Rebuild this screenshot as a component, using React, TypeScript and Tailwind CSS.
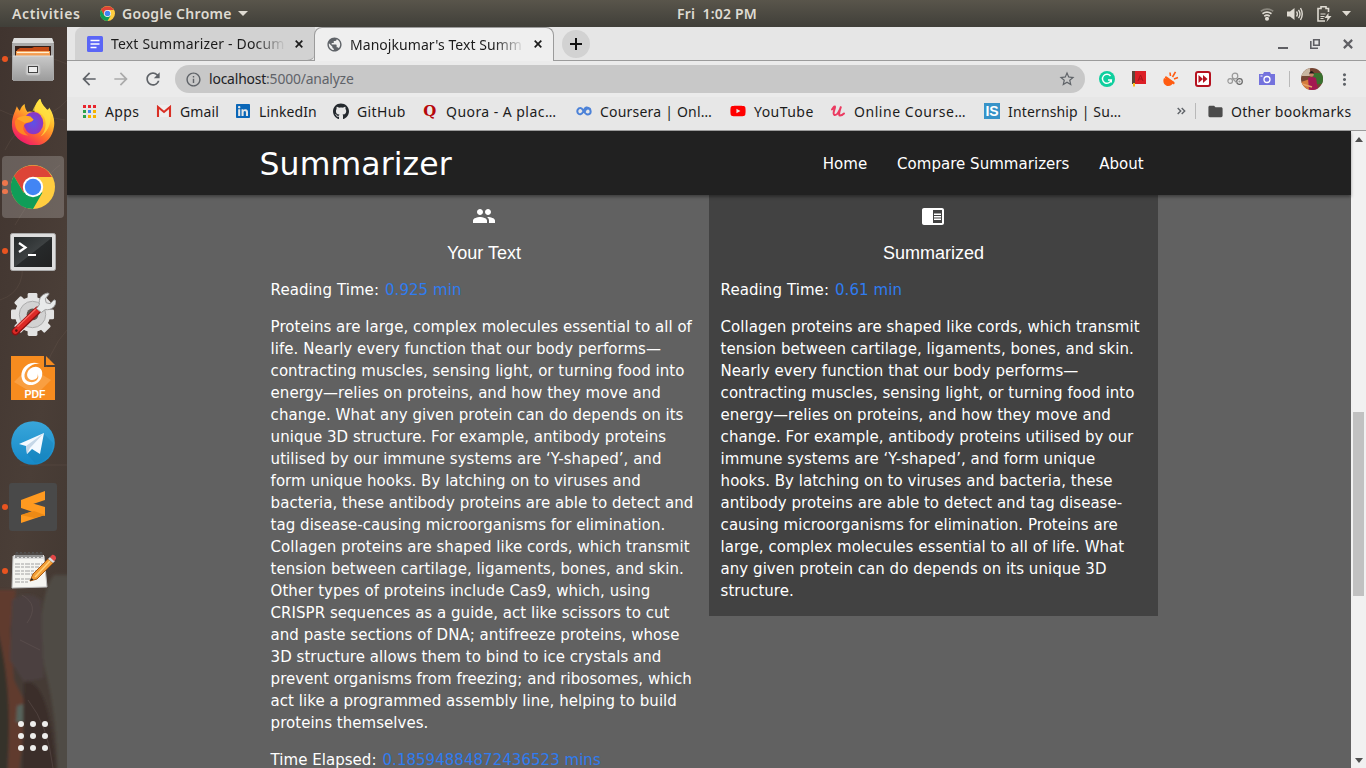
import type { ReactNode } from "react";
import { FaGithub, FaYoutube, FaLinkedin } from "react-icons/fa";
import {
  MdArrowBack, MdArrowForward, MdChromeReaderMode, MdFolder, MdInfoOutline,
  MdMoreVert, MdPeople, MdPublic, MdRefresh, MdStarBorder,
} from "react-icons/md";

const ui = "font-['Noto_Sans','Open_Sans',sans-serif]";

function ChromeLogo({ size }: { size: number }) {
  return (
    <svg width={size} height={size} viewBox="0 0 44 44">
      <circle cx="22" cy="22" r="22" fill="#ffcd40" />
      <path d="M2.9 11A22 22 0 0 1 41 12H22L12.500 27.500Z" fill="#dd4437" />
      <path d="M2.9 11A22 22 0 0 0 22 44l9.500-16.500H12.500Z" fill="#109d58" />
      <circle cx="22" cy="22" r="10.200" fill="#fff" />
      <circle cx="22" cy="22" r="8.200" fill="#4285f4" />
    </svg>
  );
}

function FilesIcon() {
  return (
    <svg className="mt-px" width="44" height="44" viewBox="0 0 44 44">
      <defs>
        <linearGradient id="fg" x1="0" y1="0" x2="0" y2="1"><stop stopColor="#c9c9c9" /><stop offset="1" stopColor="#9b9b9b" /></linearGradient>
      </defs>
      <path d="M3 0h38l2 6v36H1V6Z" fill="#aaa" />
      <path d="M3 0h38l2 5H1Z" fill="#ddd" />
      <rect x="4" y="8" width="36" height="12" fill="#34201a" />
      <path d="M6 18v-6l3-2h12l2-1h15v8Z" fill="#c34a16" />
      <path d="M5 19v-6h34v6Z" fill="#f39c50" />
      <path d="M6 14.500h32" stroke="#fff0d5" strokeWidth="1.200" />
      <path d="M2 18h40v25H2Z" fill="url(#fg)" />
      <path d="M2 18h40" stroke="#ddd" />
      <rect x="15" y="26" width="14" height="11" rx="2" fill="#d1d1d1" stroke="#bbb" />
      <rect x="17.500" y="28.500" width="9" height="6" fill="#eee" stroke="#444" />
    </svg>
  );
}

function FirefoxIcon() {
  return (
    <svg className="mb-[3px]" width="45" height="46" viewBox="0 3.500 46 41" preserveAspectRatio="none">
      <defs>
        <linearGradient id="ff" x1=".85" y1=".1" x2=".3" y2="1"><stop stopColor="#fff44f" /><stop offset=".35" stopColor="#ffb52a" /><stop offset=".65" stopColor="#ff6a2d" /><stop offset="1" stopColor="#f0136f" /></linearGradient>
        <radialGradient id="fp"><stop stopColor="#5b52e8" /><stop offset="1" stopColor="#8f35c2" /></radialGradient>
      </defs>
      <path d="M6 10c1 2 2 3 3 4 1-3 3-5 5-6 0 3 1 5 3 7 3-1 5 0 7 0 0-6 3-10 6-12 1 5 4 7 7 10 1 0 2-1 2-2 4 5 6 11 5 17-2 12-11 17-20 17S0 38 1 26c0-6 2-9 5-16Z" fill="url(#ff)" />
      <circle cx="23" cy="25" r="10" fill="url(#fp)" />
      <path d="M4 24c1-3 3-4 9-4 4-1 8 0 10 2-2 3-6 2-9 4-3 3-1 8 4 10-9 0-14-5-14-12Z" fill="#ff8522" />
      <path d="M6 21c4-3 10-3 14-2l3 3c-2 2-6 2-9 3-2-2-5-2-8-4Z" fill="#ffa727" />
      <path d="M22 14c4 0 8 1 12 6 3 6 1 13-4 17 6-3 12-11 10-20-3-4-8-6-10-13-4 3-6 6-8 10Z" fill="#ffe141" opacity=".75" />
    </svg>
  );
}

function TerminalIcon() {
  return (
    <svg className="mt-[2px]" width="46" height="38" viewBox="0 0 46 38">
      <defs><linearGradient id="tg" x1="0" y1="0" x2="1" y2="1"><stop stopColor="#252a2b" /><stop offset=".5" stopColor="#3d4142" /><stop offset=".52" stopColor="#26292a" /><stop offset="1" stopColor="#222" /></linearGradient></defs>
      <rect x=".5" y=".5" width="45" height="37" rx="2" fill="#dedede" stroke="#aaa" />
      <rect x="4" y="4" width="38" height="30" fill="url(#tg)" />
      <path d="m9 10 6.500 4.500L9 19M18 22h8" stroke="#fff" strokeWidth="2.200" fill="none" />
    </svg>
  );
}

function SettingsIcon() {
  return (
    <svg className="mb-[3px]" width="45" height="45" viewBox="0 0 46 46">
      <g fill="#e3e3e3">
        <circle cx="22" cy="24" r="18" />
        {[0, 45, 90, 135].map((a) => (
          <rect key={a} x="17" y="2" width="10" height="44" rx="1.500" transform={`rotate(${a} 22 24)`} />
        ))}
      </g>
      <circle cx="22" cy="24" r="13.500" fill="#d2d2d2" stroke="#aaa" />
      <circle cx="22" cy="24" r="6" fill="#60564f" />
      <path d="m4.500 41.500 23-22" stroke="#8d1111" strokeWidth="7.500" strokeLinecap="round" />
      <path d="m4.500 41 23-22" stroke="#dc2926" strokeWidth="5.500" strokeLinecap="round" />
      <path d="m7 36 18-17" stroke="#f4685f" strokeWidth="1.300" strokeLinecap="round" />
      <circle cx="5.500" cy="40.500" r="1.300" fill="#571310" />
      <path d="m26 18 3-4c-1-6 2-11 9-12l1 1-4 5 1 4 4 1 4-4 2 1c0 6-5 10-11 9l-4 3Z" fill="#e8eaea" stroke="#9c9c9c" />
    </svg>
  );
}

function PdfIcon() {
  return (
    <svg className="mb-[2px]" width="44" height="44" viewBox="0 0 44 44">
      <path d="M0 0h33v11h11v33H0Z" fill="#f78c1f" />
      <path d="m35 0 9 9h-9Z" fill="#f78c1f" />
      <path d="M3 26 18 11l22 13-15 15Z" fill="#faa64e" opacity=".75" />
      <path d="M29 8C17 3 8 14 11 23c3 9 17 8 20-3 2-8-6-12-12-7-5 4-3 11 2 11 5 0 7-4 5-7 4 6-2 10-7 9-7-1-7-9-2-14 4-4 8-5 12-4Z" fill="#fff" />
      <text x="24" y="42" textAnchor="middle" fill="#fff" fontFamily="Liberation Sans" fontWeight="700" fontSize="10.500">PDF</text>
    </svg>
  );
}

function TelegramIcon() {
  return (
    <svg className="mb-px" width="44" height="44" viewBox="0 0 44 44">
      <defs><linearGradient id="tel" x1="0" y1="0" x2="0" y2="1"><stop stopColor="#39a6da" /><stop offset="1" stopColor="#1589c8" /></linearGradient></defs>
      <circle cx="22" cy="22" r="21.800" fill="url(#tel)" />
      <path d="m33 13 9 9c0 10-7 19-18 20l-8-9Z" fill="#137caf" opacity=".3" />
      <path d="m8 23 25-11-4 21-8-5-5 5-1-8Z" fill="#f4f9ff" />
      <path d="m15 25 18-13-14 15-3 6Z" fill="#c5d6e7" />
    </svg>
  );
}

function SublimeIcon() {
  return (
    <svg width="48" height="48" viewBox="0 0 48 48">
      <rect width="48" height="48" rx="3" fill="#494949" />
      <path d="m12 17 24-9v9l-24 8Z" fill="#ff9a20" />
      <path d="m12 17 24 7v9l-24-8Z" fill="#ff9a20" />
      <path d="m12 32 24-8v8l-24 8Z" fill="#ff9a20" />
      <path d="m12 32 13-4 11 4-11 3Z" fill="#e58311" opacity=".7" />
    </svg>
  );
}

function NotesIcon() {
  return (
    <svg className="mb-px" width="46" height="38" viewBox="0 0 46 38">
      <path d="M3 4h31l3 31-35 1Z" fill="#f5f5f1" stroke="#bbb" />
      <path d="M4 3h30v4H4Z" fill="#ddd" />
      {[6, 10, 14, 18, 22, 26, 30].map((x) => <path key={x} d={`M${x} 6V2c0-2 2-2 2 0v3`} stroke="#555" strokeWidth="1.100" fill="none" />)}
      <path d="M5 12h28M5 15h24M5 19h26M5 22h20M5 27h16M5 30h13" stroke="#999" strokeWidth=".9" strokeDasharray="5 1 3 1" />
      <path d="m20 29 3-7L38 7l5 4-16 16Z" fill="#f29d35" stroke="#a95a14" />
      <path d="m25 25 15-16" stroke="#ffd07a" strokeWidth="1.500" />
      <path d="m38 7 2-2 5 4-2 2Z" fill="#ddd" />
      <path d="m40 5 2-2c2-1 5 2 4 4l-2 2Z" fill="#e34747" />
      <path d="m20 29 1.500-3 2 1.500Z" fill="#222" />
    </svg>
  );
}

function DockItem({ children, dots = 0, active = false }: { children: ReactNode; dots?: number; active?: boolean }) {
  return (
    <div className="flex h-16 w-[67px] shrink-0 items-center">
      <div className="flex w-2 flex-col items-center gap-[3px] pl-[2px]">
        {Array.from({ length: dots }, (_, i) => <span key={i} className="size-[5.500px] rounded-full bg-[#e95420]" />)}
      </div>
      <div className={`-ml-[6px] flex h-[62px] w-[62px] items-center justify-center rounded ${active ? "bg-white/20" : ""}`}>{children}</div>
    </div>
  );
}

function Dock() {
  return (
    <aside className="relative flex w-[67px] shrink-0 flex-col overflow-hidden bg-[linear-gradient(100deg,#40342f,#4a3e37_55%,#403630)]">
      <svg className="absolute inset-0" width="67" height="741" viewBox="0 27 67 741">
        <defs><filter id="soft"><feGaussianBlur stdDeviation="1.500" /></filter></defs>
        <g fill="none" stroke="#6a5a4e" opacity=".3">
          <path d="M0 60q30-12 67 4M0 110q40 20 67-10M15 225q30-50 45-60M5 150q20-40 60-30M40 390q8-40 27-60M20 465h47M0 300q30-10 20-50" />
        </g>
        <g filter="url(#soft)">
          <path d="M-5 600h77v178H-5Z" fill="#453a34" />
          <path d="M72 575H54c-6 8-8 16-11 30-3 20-2 45 2 65 7 25 12 60 13 108h14Z" fill="#504c45" />
          <path d="M-5 590h21l-6 40 4 50 10 20v30l-6 48H8c2-60-2-90-13-120Z" fill="#603b2e" />
          <path d="M-5 620c14 50 17 100 11 158H-5Z" fill="#34322c" />
          <path d="M12 600q16-10 29 0l3 78-20 4-14-22Z" fill="#4b4140" />
          <path d="M24 682q26-6 33 96H22Z" fill="#3a2f2c" />
          <path d="m17 706 6-2v18h-7Z" fill="#56645b" />
        </g>
        <path d="M22 595q18 10 5 28M20 640l20 10M28 700q20 25 25 68" stroke="#6b5d59" opacity=".4" fill="none" />
      </svg>
      <div className="relative flex h-full flex-col">
        <DockItem dots={1}><FilesIcon /></DockItem>
        <DockItem><FirefoxIcon /></DockItem>
        <DockItem dots={2} active><ChromeLogo size={44} /></DockItem>
        <DockItem dots={1}><TerminalIcon /></DockItem>
        <DockItem><SettingsIcon /></DockItem>
        <DockItem><PdfIcon /></DockItem>
        <DockItem><TelegramIcon /></DockItem>
        <DockItem dots={1}><SublimeIcon /></DockItem>
        <DockItem dots={1}><NotesIcon /></DockItem>
        <div className="mt-auto mb-[17px] ml-[18px] grid w-[30px] grid-cols-3 gap-[6px]">
          {Array.from({ length: 9 }, (_, i) => <span key={i} className="size-[6px] rounded-full bg-[#eeeeec]" />)}
        </div>
      </div>
    </aside>
  );
}

function TopBar() {
  return (
    <header className={`${ui} flex h-[27px] shrink-0 items-center bg-gradient-to-b from-[#59554b] to-[#403f39] text-[14px] font-semibold text-[#dfdbd2]`}>
      <span className="ml-3 w-[69px] whitespace-nowrap tracking-[0.600px]">Activities</span>
      <span className="ml-[19px]"><ChromeLogo size={15} /></span>
      <span className="ml-[7px] w-[110px] whitespace-nowrap tracking-[0.300px]">Google Chrome</span>
      <svg className="ml-[6px]" width="10" height="5"><path d="M0 0h10L5 5Z" fill="#dfdbd2" /></svg>
      <span className="ml-[429px] w-[84px] whitespace-pre tracking-[0.150px]">Fri  1:02 PM</span>
      <div className="ml-auto flex items-center">
        <svg width="14" height="14" viewBox="0 0 14 14" fill="none" stroke="#dfdbd2" strokeWidth="1.700">
          <path d="M.8 4.200Q7 .2 13.200 4.200" opacity=".4" /><path d="M2.500 6.700q4.500-3 9 0M4.300 9.200q2.700-2 5.400 0" /><circle cx="7" cy="11.700" r="1.200" fill="#dfdbd2" />
        </svg>
        <svg className="ml-[13px]" width="16" height="14" viewBox="0 0 16 14">
          <path d="M0 4.500h3L7.500 1v12L3 9.500H0Z" fill="#dfdbd2" /><path d="M9.500 4.500q1.800 2.500 0 5M11.500 2.800q3 4.200 0 8.400M13.500 1q3.500 6 0 12" stroke="#dfdbd2" strokeWidth="1.400" fill="none" />
        </svg>
        <svg className="ml-[14px]" width="15" height="16" viewBox="0 0 15 16">
          <path d="M11.500 6V2.500H9V.8H4v1.700H1V15h7" fill="none" stroke="#dfdbd2" strokeWidth="1.600" />
          <path d="M3.500 8h5M3.500 10.500h4M3.500 12.500h3" stroke="#dfdbd2" strokeWidth="1.200" />
          <path d="m11.500 7-4 5h3l-1 4 5-6h-3Z" fill="#dfdbd2" />
        </svg>
        <svg className="mr-[15px] ml-[10px]" width="9" height="5"><path d="M0 0h9L4.500 5Z" fill="#dfdbd2" /></svg>
      </div>
    </header>
  );
}

function CloseMark({ size = 8 }: { size?: number }) {
  return <svg width={size} height={size} viewBox="0 0 8 8"><path d="m.7.7 6.600 6.600M7.300.7.700 7.300" stroke="currentColor" strokeWidth="1.700" /></svg>;
}

const tabTitle = "w-[175px] whitespace-nowrap bg-[linear-gradient(90deg,#1c1c1c_82%,transparent)] bg-clip-text text-transparent";

function TabStrip() {
  return (
    <div className={`${ui} flex h-[34px] items-stretch bg-[#e6e6e6] text-[14px] text-[#1c1c1c] shadow-[inset_0_-1px_0_#9b9b9b]`}>
      <div className="ml-2 flex w-[240px] items-center rounded-tl-lg rounded-br-lg border-b border-[#9b9b9b] bg-[#d2d2d2] pl-3">
        <svg width="16" height="16"><rect width="16" height="16" rx="1.500" fill="#5b66f6" /><path d="M3.500 4.500h9M3.500 8h9M3.500 11.500h6" stroke="#fff" strokeWidth="1.500" /></svg>
        <span className={`${tabTitle} ml-2 tracking-[0.180px]`}>Text Summarizer - Docum</span>
        <span className="ml-[9px]"><CloseMark /></span>
      </div>
      <div className="-ml-[1px] flex w-[240px] items-center rounded-t-lg border-x border-t border-[#9b9b9b] bg-[#efefef] pb-px pl-[11px]">
        <MdPublic size={17} className="text-[#5f6368]" />
        <span className={`${tabTitle} ml-[7px] tracking-[0.050px]`}>Manojkumar's Text Summ</span>
        <span className="ml-[9px]"><CloseMark /></span>
      </div>
      <div className="mt-[3px] ml-2 flex size-7 items-center justify-center rounded-full bg-[#d2d2d2]">
        <svg width="12" height="12"><path d="M6 0v12M0 6h12" stroke="#111" strokeWidth="2" /></svg>
      </div>
      <div className="mr-[13px] ml-auto flex items-center text-[#5f5f64]">
        <svg width="10" height="10"><path d="M0 9h10" stroke="currentColor" strokeWidth="2" /></svg>
        <svg className="ml-[22px]" width="10" height="10"><path d="M3.700.8h5.500v5.500H3.700ZM.8 2v7.200H8" fill="none" stroke="currentColor" strokeWidth="1.600" /></svg>
        <span className="ml-[23px]"><CloseMark size={10} /></span>
      </div>
    </div>
  );
}

function Toolbar() {
  return (
    <div className={`${ui} flex h-9 items-center bg-[#ebebeb] pl-[12px] text-[#5f6368]`}>
      <MdArrowBack size={20} /><MdArrowForward size={20} className="ml-[12px] text-[#aaa]" /><MdRefresh size={20} className="ml-[12px]" />
      <div className="ml-[12px] flex h-7 w-[910px] items-center rounded-full bg-[#c8c8c8] pr-[9px] pl-[10px]">
        <MdInfoOutline size={17} />
        <span className="ml-[7px] text-[13.900px] tracking-[-0.180px] whitespace-nowrap"><span className="text-[#202124]">localhost</span>:5000/analyze</span>
        <MdStarBorder size={18} className="ml-auto" />
      </div>
      <div className="ml-[14px] flex items-center gap-4">
        <svg width="16" height="16"><circle cx="8" cy="8" r="8" fill="#0fcf9e" /><path d="M11.500 5A4.500 4.500 0 1 0 12.300 9H9M12.300 9v2.500" fill="none" stroke="#fff" strokeWidth="1.400" /></svg>
        <svg width="16" height="16"><path d="M1 0h3v14H1Z" fill="#594638" /><path d="M4 0h11v13H4Z" fill="#dc1f26" /><path d="M1 13h14v2H1Z" fill="#eee" /><path d="m7 10 2.500-6 2.500 6M8 8h3" stroke="#a8151b" fill="none" /><path d="M2 12h2v4l-1-1-1 1Z" fill="#f8bb19" /></svg>
        <svg width="16" height="16"><path d="M1 7c-1.500 3-.5 7 3 8 3.500.5 6-1.500 6.500-4.500Z" fill="#ff5c12" /><path d="m3 6.500 7.500 5.500" stroke="#ff5c12" strokeWidth="2.300" strokeLinecap="round" /><path d="M7.500 5 7 1.500M9.500 6 12.500.8M11 8l4-1.500" stroke="#ff5c12" strokeWidth="1.600" /></svg>
        <svg width="16" height="16"><rect x="1" y="1" width="14" height="14" rx="2" fill="#fff" stroke="#b5121f" strokeWidth="2" /><path d="M3.500 4v8l4.500-4ZM8 4v8l4.500-4Z" fill="#b5121f" /></svg>
        <svg width="16" height="16" fill="none" stroke="#999" strokeWidth="1.200"><circle cx="8" cy="5" r="2.800" /><circle cx="3.200" cy="10" r="2.300" /><circle cx="12.500" cy="10.500" r="2.800" stroke="#666" /><path d="m5 7 5 5" /><circle cx="12.500" cy="10.500" r=".5" /></svg>
        <svg width="16" height="16"><path d="M0 3h4l1-2h6l1 2h4v11H0Z" fill="#7472dd" /><circle cx="8" cy="8.500" r="3" fill="none" stroke="#fff" strokeWidth="1.300" /><path d="M1.500 5h2" stroke="#fff" /></svg>
      </div>
      <span className="ml-[14px] h-4 w-px bg-[#b9b9b9]" />
      <svg className="ml-[11px]" width="22" height="22" viewBox="0 0 22 22">
        <defs><clipPath id="av"><circle cx="11" cy="11" r="11" /></clipPath></defs>
        <g clipPath="url(#av)"><path fill="#744432" d="M0 0h22v22H0Z" /><path fill="#c8b5a0" d="M0 0h9v8H0Z" /><path fill="#39712f" d="M12 5h10v11H12Z" /><path fill="#d47c3d" d="m0 14 9-3 2 11H0Z" /><path fill="#a31851" d="M7 10q4-2 8 0l2 12H8Z" /><circle cx="10.500" cy="6.500" r="2.300" fill="#c58368" /><path fill="#201a19" d="M7.800 5.500q3-5 5.500 0Z" /><path d="m1 16 10 3" stroke="#e7a268" strokeWidth="1.500" /></g>
      </svg>
      <MdMoreVert size={19} className="ml-[12px]" />
    </div>
  );
}

function Bookmark({ icon, label, className }: { icon: ReactNode; label: string; className: string }) {
  return <div className={`flex shrink-0 items-center gap-2 whitespace-nowrap ${className}`}><span className="flex size-4 items-center justify-center">{icon}</span>{label}</div>;
}

function BookmarksBar() {
  const apps = ["#e8252d", "#e8252d", "#e8252d", "#2ba24c", "#4285f4", "#f5b400", "#2ba24c", "#f5b400", "#f5b400"];
  return (
    <div className={`${ui} flex h-[34px] items-center border-b border-[#9b9b9b] bg-[#e7e7e7] pb-[5px] pl-[14px] text-[14px] text-[#1c1c1c]`}>
      <Bookmark className="w-[75px] tracking-[0.350px]" label="Apps" icon={<svg width="13" height="13">{apps.map((c, i) => <rect key={i} x={(i % 3) * 5} y={Math.floor(i / 3) * 5} width="3" height="3" fill={c} />)}</svg>} />
      <Bookmark className="w-[79px] tracking-[0.150px]" label="Gmail" icon={<svg width="16" height="12"><path d="M1 0h14v12H1Z" fill="#eee" /><path d="M2 12V2l6 5 6-5v10" fill="none" stroke="#d93025" strokeWidth="2.100" /></svg>} />
      <Bookmark className="w-[98px] tracking-[0.100px]" label="LinkedIn" icon={<FaLinkedin size={16} color="#0a66b7" />} />
      <Bookmark className="w-[89px] tracking-[0.350px]" label="GitHub" icon={<FaGithub size={17} color="#24292e" />} />
      <Bookmark className="w-[154px] tracking-[0.450px]" label="Quora - A plac…" icon={<span className="font-['DejaVu_Serif',serif] text-[15px] leading-4 font-bold text-[#b7070a]">Q</span>} />
      <Bookmark className="w-[154px] tracking-[0.200px]" label="Coursera | Onl…" icon={<svg width="16" height="10"><path d="M14.500 3C11 .5 9 1 7.500 5S3 9 1.800 7s0-5 2.700-5S8 9 12 8.500s3-6 0-6S9 6 8 7" fill="none" stroke="#4c82d8" strokeWidth="2" /></svg>} />
      <Bookmark className="w-[100px] tracking-[0.450px]" label="YouTube" icon={<FaYoutube size={16} color="#ff0000" />} />
      <Bookmark className="w-[154px] tracking-[0.550px]" label="Online Course…" icon={<svg width="16" height="12"><path d="M2 4.500Q5 0 5 2C5 4 2 9 4.500 10s5.500-5 6.500-8.500c-1 3-3 9-1 9q2 0 4-2" fill="none" stroke="#eb3b61" strokeWidth="2" strokeLinecap="round" /></svg>} />
      <Bookmark className="w-[150px] tracking-[0.150px]" label="Internship | Su…" icon={<span className="flex size-4 items-center justify-center bg-[#3793c8] font-['Liberation_Sans',sans-serif] text-[14px] font-bold tracking-normal text-white">IS</span>} />
      <div className="mr-[14px] ml-auto flex items-center whitespace-nowrap">
        <svg width="9" height="8"><path d="m.7 1 3 3-3 3M4.700 1l3 3-3 3" stroke="#5f6368" strokeWidth="1.400" fill="none" /></svg>
        <span className="mr-[11px] ml-[9px] h-4 w-px bg-[#b9b9b9]" />
        <MdFolder size={17} className="text-[#4c4c4c]" /><span className="ml-[7px] w-[121px] tracking-[0.300px]">Other bookmarks</span>
      </div>
    </div>
  );
}

const original = [
  "Proteins are large, complex molecules essential to all of", "life. Nearly every function that our body performs—",
  "contracting muscles, sensing light, or turning food into", "energy—relies on proteins, and how they move and",
  "change. What any given protein can do depends on its", "unique 3D structure. For example, antibody proteins",
  "utilised by our immune systems are ‘Y-shaped’, and", "form unique hooks. By latching on to viruses and",
  "bacteria, these antibody proteins are able to detect and", "tag disease-causing microorganisms for elimination.",
  "Collagen proteins are shaped like cords, which transmit", "tension between cartilage, ligaments, bones, and skin.",
  "Other types of proteins include Cas9, which, using", "CRISPR sequences as a guide, act like scissors to cut",
  "and paste sections of DNA; antifreeze proteins, whose", "3D structure allows them to bind to ice crystals and",
  "prevent organisms from freezing; and ribosomes, which", "act like a programmed assembly line, helping to build", "proteins themselves.",
];
const summary = [
  "Collagen proteins are shaped like cords, which transmit", "tension between cartilage, ligaments, bones, and skin.",
  "Nearly every function that our body performs—", "contracting muscles, sensing light, or turning food into",
  "energy—relies on proteins, and how they move and", "change. For example, antibody proteins utilised by our",
  "immune systems are ‘Y-shaped’, and form unique", "hooks. By latching on to viruses and bacteria, these",
  "antibody proteins are able to detect and tag disease-", "causing microorganisms for elimination. Proteins are",
  "large, complex molecules essential to all of life. What", "any given protein can do depends on its unique 3D", "structure.",
];

function Panel({ icon, title, time, lines, className, elapsed }: { icon: ReactNode; title: string; time: string; lines: string[]; className: string; elapsed?: string }) {
  return (
    <section className={`pt-[9px] ${className}`}>
      <div className="flex flex-col items-center">
        {icon}
        <h5 className="mt-[13px] font-['Liberation_Sans',sans-serif] text-[18px] leading-6 tracking-normal">{title}</h5>
      </div>
      <div className="pl-[11.600px]">
        <p className="mt-[14px] tracking-[0.080px]">Reading Time: <span className="ml-[1px] text-[#2f7cf0]">{time}</span></p>
        <p className="mt-[15px]">{lines.map((l, i) => <span key={i} className="block">{l}</span>)}</p>
        {elapsed && <p className="mt-[15px]">Time Elapsed: <span className="ml-[1.200px] text-[#2f7cf0]">{elapsed}</span></p>}
      </div>
    </section>
  );
}

function Page() {
  return (
    <div className="flex h-[637px] overflow-hidden">
      <main className="flex w-[1284px] flex-col bg-[#616161] font-['DejaVu_Sans',sans-serif] text-[15px] leading-[22px] tracking-[0.035px] whitespace-nowrap text-white">
        <nav className="z-10 flex h-16 shrink-0 items-center bg-[#212121] pt-[2px] pr-[207.300px] pl-[192.500px] shadow-[0_2px_3px_rgba(0,0,0,.35)]">
          <span className="text-[31.500px] leading-[62px] tracking-[0.100px]">Summarizer</span>
          <div className="ml-auto flex gap-[29.800px]"><span>Home</span><span>Compare Summarizers</span><span>About</span></div>
        </nav>
        <div className="ml-[192px] flex items-start">
          <Panel className="w-[450px]" icon={<MdPeople size={24} />} title="Your Text" time="0.925 min" lines={original} elapsed="0.18594884872436523 mins" />
          <Panel className="h-[421px] w-[449px] bg-[#424242]" icon={<MdChromeReaderMode size={24} className="mr-px" />} title="Summarized" time="0.61 min" lines={summary} />
        </div>
      </main>
      <div className="flex w-[15px] flex-col items-center bg-[#f1f1f1]">
        <svg className="mt-[6px]" width="8" height="5"><path d="M0 5h8L4 0Z" fill="#505050" /></svg>
        <div className="mt-[270px] h-[184px] w-[11px] bg-[#c1c1c1]" />
        <svg className="mt-auto mb-[5px]" width="8" height="5"><path d="M0 0h8L4 5Z" fill="#505050" /></svg>
      </div>
    </div>
  );
}

export default function App() {
  return (
    <div className="flex h-[768px] w-[1366px] flex-col overflow-hidden">
      <TopBar />
      <div className="flex min-h-0 flex-1">
        <Dock />
        <div className="flex w-[1299px] flex-col"><TabStrip /><Toolbar /><BookmarksBar /><Page /></div>
      </div>
    </div>
  );
}
